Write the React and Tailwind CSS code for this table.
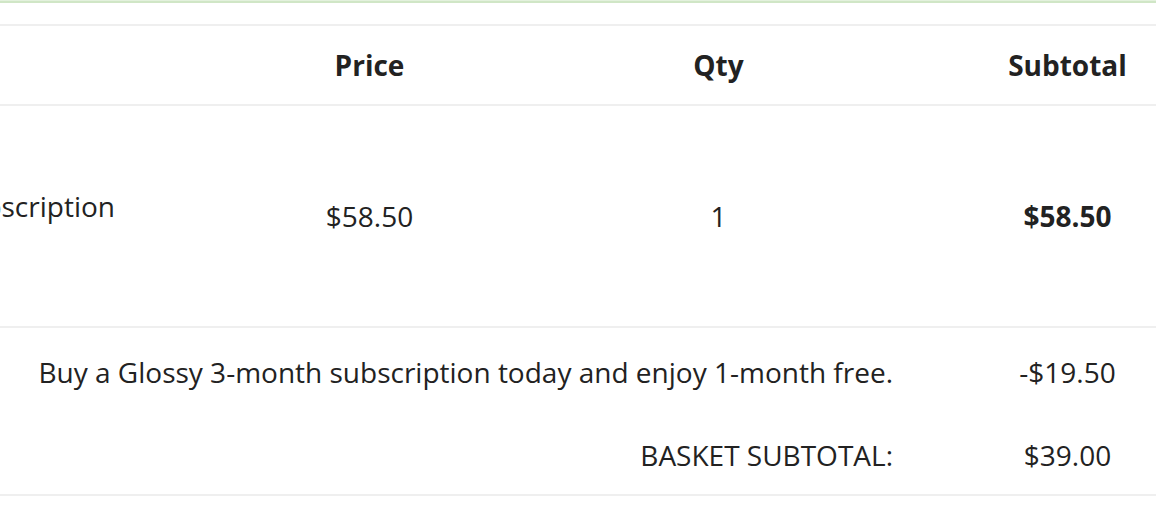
import React from 'react'

export default function App() {
  const font = { fontFamily: '"Open Sans", "Liberation Sans", sans-serif' }

  return (
    <div className="w-[1156px] h-[528px] overflow-hidden bg-white text-[#222] text-[28px]" style={font}>
      {/* alert strip at top */}
      <div className="h-[1px] bg-[#e3f1dd]" />
      <div className="h-[2px] bg-[#d0e6c6]" />
      <div className="h-[21px]" />

      <div className="border-t-2 border-[#efefef]">
        <div className="ml-[-205px] w-[1447px]">
          {/* header */}
          <div className="grid grid-cols-[400px_349px_349px_349px] h-[80px] items-center font-bold border-b-2 border-[#efefef]">
            <div />
            <div className="text-center">Price</div>
            <div className="text-center">Qty</div>
            <div className="text-center">Subtotal</div>
          </div>

          {/* item row */}
          <div className="grid grid-cols-[400px_349px_349px_349px] h-[222px] items-center border-b-2 border-[#efefef]">
            <div className="text-right whitespace-nowrap pr-[80px] mb-5">Glossy Subscription</div>
            <div className="text-center">$58.50</div>
            <div className="text-center">1</div>
            <div className="text-center font-bold">$58.50</div>
          </div>

          {/* totals */}
          <div className="border-b-2 border-[#efefef]">
            <div className="grid grid-cols-[400px_349px_349px_349px] h-[88px] items-center">
              <div className="col-span-3 text-right whitespace-nowrap">
                Buy a Glossy 3-month subscription today and enjoy 1-month free.
              </div>
              <div className="text-center">-$19.50</div>
            </div>
            <div className="grid grid-cols-[400px_349px_349px_349px] h-[78px] items-center">
              <div className="col-span-3 text-right">BASKET SUBTOTAL:</div>
              <div className="text-center">$39.00</div>
            </div>
          </div>
        </div>
      </div>
    </div>
  )
}
